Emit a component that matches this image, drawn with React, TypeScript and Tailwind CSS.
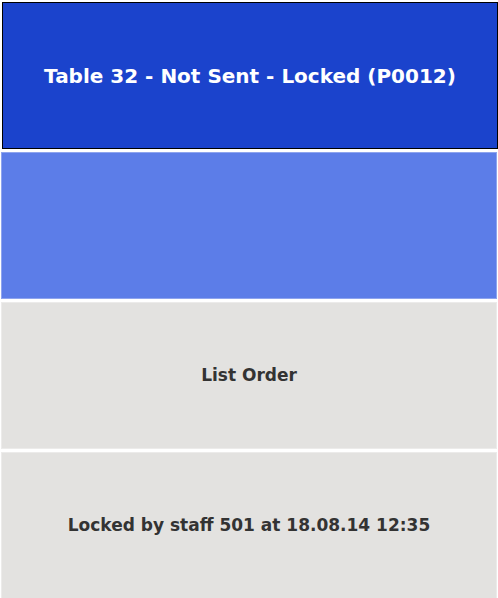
const App = () => {
    return (
        <div className="w-[498px] h-[598px] bg-white overflow-hidden flex flex-col gap-[3px] pl-[1px] pt-[2px]" style={{ fontFamily: "'DejaVu Sans', Verdana, sans-serif" }}>
            <div className="ml-[1px] w-[496px] h-[147px] shrink-0 bg-[#1b43cc] border border-black flex items-center justify-center">
                <h1 className="text-[20px] font-bold text-white">Table 32 - Not Sent - Locked (P0012)</h1>
            </div>
            <div className="w-[496px] h-[147px] shrink-0 bg-[#5c7de8] border border-[#8ea4ee]"></div>
            <div className="w-[496px] h-[147px] shrink-0 bg-[#e3e2e0] border border-[#ecebea] flex items-center justify-center">
                <p className="text-[17px] font-bold text-[#333333]">List Order</p>
            </div>
            <div className="w-[496px] h-[148px] shrink-0 bg-[#e3e2e0] border border-[#ecebea] flex items-center justify-center">
                <p className="text-[17px] font-bold text-[#333333]">Locked by staff 501 at 18.08.14 12:35</p>
            </div>
        </div>
    );
};

export default App;
